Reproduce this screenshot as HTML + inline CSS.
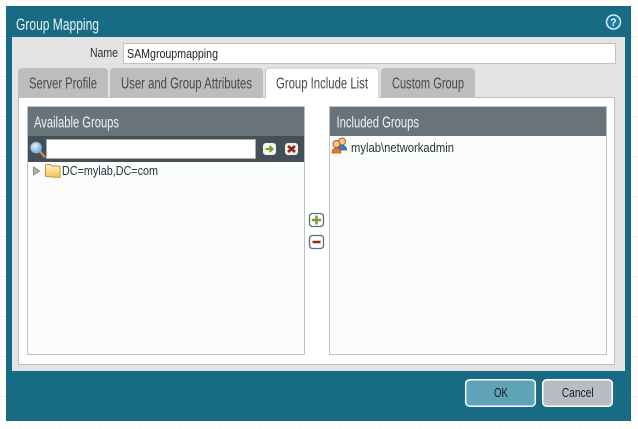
<!DOCTYPE html>
<html><head><meta charset="utf-8"><style>
html,body{margin:0;padding:0;background:#fff;width:638px;height:429px;overflow:hidden}
svg{display:block}
text{font-family:"Liberation Sans",sans-serif;font-size:13px;fill:#444c52}
</style></head><body>
<svg width="638" height="429" viewBox="0 0 638 429" xmlns="http://www.w3.org/2000/svg" shape-rendering="geometricPrecision">
<defs>
<pattern id="minor" width="10" height="10" patternUnits="userSpaceOnUse" x="-5" y="-4"><path d="M5 0V10M0 4H10" stroke="#fafafa" stroke-width="1" fill="none"/></pattern>
<pattern id="major" width="40" height="40" patternUnits="userSpaceOnUse" x="-5" y="-4"><path d="M40.5 0V40M0 .5H40" stroke="#eeeeee" stroke-width="1" fill="none"/></pattern>
<linearGradient id="fold" x1="0" y1="0" x2="0" y2="1"><stop offset="0" stop-color="#fff3c4"/><stop offset="1" stop-color="#f3c35c"/></linearGradient>
<radialGradient id="mag" cx=".4" cy=".35" r=".7"><stop offset="0" stop-color="#e4f3ff"/><stop offset="1" stop-color="#6fa9de"/></radialGradient>
</defs>
<rect width="638" height="429" fill="#fff"/>
<rect width="638" height="429" fill="url(#minor)"/>
<rect width="638" height="429" fill="url(#major)"/>
<!-- dialog -->
<rect x="6" y="6" width="625" height="415" fill="#176b84"/>
<rect x="12" y="37" width="613" height="334" fill="#e3e3e3"/>
<text x="16" y="30" textLength="83" lengthAdjust="spacingAndGlyphs" style="font-size:16.5px;fill:#e8f0f3">Group Mapping</text>
<circle cx="613.5" cy="22" r="7" fill="#1b78a8" stroke="#d5ebf4" stroke-width="1.6"/>
<text x="610.3" y="26" textLength="6.5" lengthAdjust="spacingAndGlyphs" style="font-size:11px;font-weight:bold;fill:#fff">?</text>
<!-- name -->
<text x="90" y="57" textLength="28" lengthAdjust="spacingAndGlyphs" style="font-size:13px;fill:#333">Name</text>
<rect x="123.5" y="43.5" width="492" height="20" fill="#fff" stroke="#c2c2c2"/>
<text x="127" y="58" textLength="91" lengthAdjust="spacingAndGlyphs" style="font-size:12.5px;fill:#222">SAMgroupmapping</text>
<!-- tab panel -->
<rect x="18.5" y="97.5" width="596" height="267" fill="#fff" stroke="#bfbfbf"/>
<!-- tabs -->
<path d="M18 97V72a4 4 0 0 1 4-4h82a4 4 0 0 1 4 4v25z" fill="#bdbdbd"/>
<path d="M110 97V72a4 4 0 0 1 4-4h145a4 4 0 0 1 4 4v25z" fill="#bdbdbd"/>
<path d="M381 97V72a4 4 0 0 1 4-4h86a4 4 0 0 1 4 4v25z" fill="#bdbdbd"/>
<path d="M265.5 98V72a4 4 0 0 1 4-4h105.500a4 4 0 0 1 4 4v26z" fill="#fff" stroke="#c4c4c4"/>
<rect x="266" y="97" width="112.500" height="2" fill="#fff"/>
<text x="29" y="88.500" textLength="68" lengthAdjust="spacingAndGlyphs" style="font-size:15.500px">Server Profile</text>
<text x="121" y="88.500" textLength="131" lengthAdjust="spacingAndGlyphs" style="font-size:15.500px">User and Group Attributes</text>
<text x="276" y="88.500" textLength="92" lengthAdjust="spacingAndGlyphs" style="font-size:15.500px">Group Include List</text>
<text x="392" y="88.500" textLength="72" lengthAdjust="spacingAndGlyphs" style="font-size:15.500px">Custom Group</text>
<!-- available groups -->
<rect x="27.500" y="106.500" width="277" height="248" fill="#fbfcfc" stroke="#c0c3c6"/>
<rect x="28" y="107" width="276" height="29" fill="#68737a"/>
<rect x="28" y="136" width="276" height="26" fill="#444f58"/>
<text x="34" y="127.500" textLength="85" lengthAdjust="spacingAndGlyphs" style="font-size:15.500px;fill:#f0f2f3">Available Groups</text>
<!-- search -->
<line x1="40" y1="151.500" x2="44.500" y2="156.500" stroke="#c98f4a" stroke-width="2.400" stroke-linecap="round"/>
<circle cx="36" cy="147.500" r="5.300" fill="url(#mag)" stroke="#8fb4d4" stroke-width="1"/>
<rect x="46.500" y="139.500" width="209" height="19" fill="#fff" stroke="#a9adb0"/>
<rect x="263" y="143" width="13" height="12" rx="3" fill="#f3f4ee"/>
<path d="M265.500 149H272M269.500 146L272.500 149L269.500 152" fill="none" stroke="#7d9a2e" stroke-width="2"/>
<rect x="285" y="143" width="13" height="12" rx="3" fill="#f3f1ee"/>
<path d="M288 146L295 152M295 146L288 152" stroke="#8c2318" stroke-width="2.600"/>
<!-- tree -->
<path d="M33.500 167L39.500 171L33.500 175Z" fill="#b5b5b5" stroke="#8a8a8a" stroke-width="1"/>
<path d="M45.500 176.500V165.500a1 1 0 0 1 1-1h4l1.500 1.500h7a1 1 0 0 1 1 1v10.500z" fill="url(#fold)" stroke="#c8962e" stroke-width="1" stroke-linejoin="round"/>
<text x="62" y="175" textLength="96" lengthAdjust="spacingAndGlyphs" style="font-size:13px;fill:#2c3236">DC=mylab,DC=com</text>
<!-- mid buttons -->
<rect x="309.500" y="213.500" width="14" height="13" rx="3" fill="#fff" stroke="#5b6e7a" stroke-width="1.300"/>
<path d="M311.800 220H321.200M316.500 215.500V224.500" stroke="#7f9e35" stroke-width="2.500"/>
<rect x="309.500" y="235.500" width="14" height="13" rx="3" fill="#fff" stroke="#5b6e7a" stroke-width="1.300"/>
<path d="M312.500 242H320.500" stroke="#962a1c" stroke-width="2.500"/>
<!-- included groups -->
<rect x="329.500" y="106.500" width="277" height="248" fill="#fbfcfc" stroke="#c0c3c6"/>
<rect x="330" y="107" width="276" height="29" fill="#68737a"/>
<text x="336.500" y="127.500" textLength="82.500" lengthAdjust="spacingAndGlyphs" style="font-size:15.500px;fill:#f0f2f3">Included Groups</text>
<circle cx="342" cy="141.500" r="3.500" fill="#f4c890" stroke="#a8641e" stroke-width="1"/>
<path d="M338 150c0-3.500 1.500-4.500 4-4.500s4.500 1 4.500 4.500z" fill="#2f7fd0" stroke="#1d5c9f" stroke-width=".8"/>
<circle cx="336.500" cy="144" r="3.500" fill="#f6c68a" stroke="#b5591a" stroke-width="1"/>
<path d="M332 153c0-4 2-5 4.500-5s4.500 1 4.500 5z" fill="#e8792a" stroke="#b5591a" stroke-width=".8"/>
<text x="351" y="152" textLength="103" lengthAdjust="spacingAndGlyphs" style="font-size:13px;fill:#2c3236">mylab\networkadmin</text>
<!-- footer buttons -->
<rect x="465.700" y="379.700" width="69.600" height="26.600" rx="4" fill="#5fa3b8" stroke="#fff" stroke-width="1.500"/>
<text x="494" y="397" textLength="14" lengthAdjust="spacingAndGlyphs" style="font-size:13px;fill:#1a1a1a">OK</text>
<rect x="542.700" y="379.700" width="69.600" height="26.600" rx="4" fill="#b9bcc4" stroke="#fff" stroke-width="1.500"/>
<text x="561.700" y="397" textLength="32" lengthAdjust="spacingAndGlyphs" style="font-size:13px;fill:#1a1a1a">Cancel</text>
</svg>
</body></html>
